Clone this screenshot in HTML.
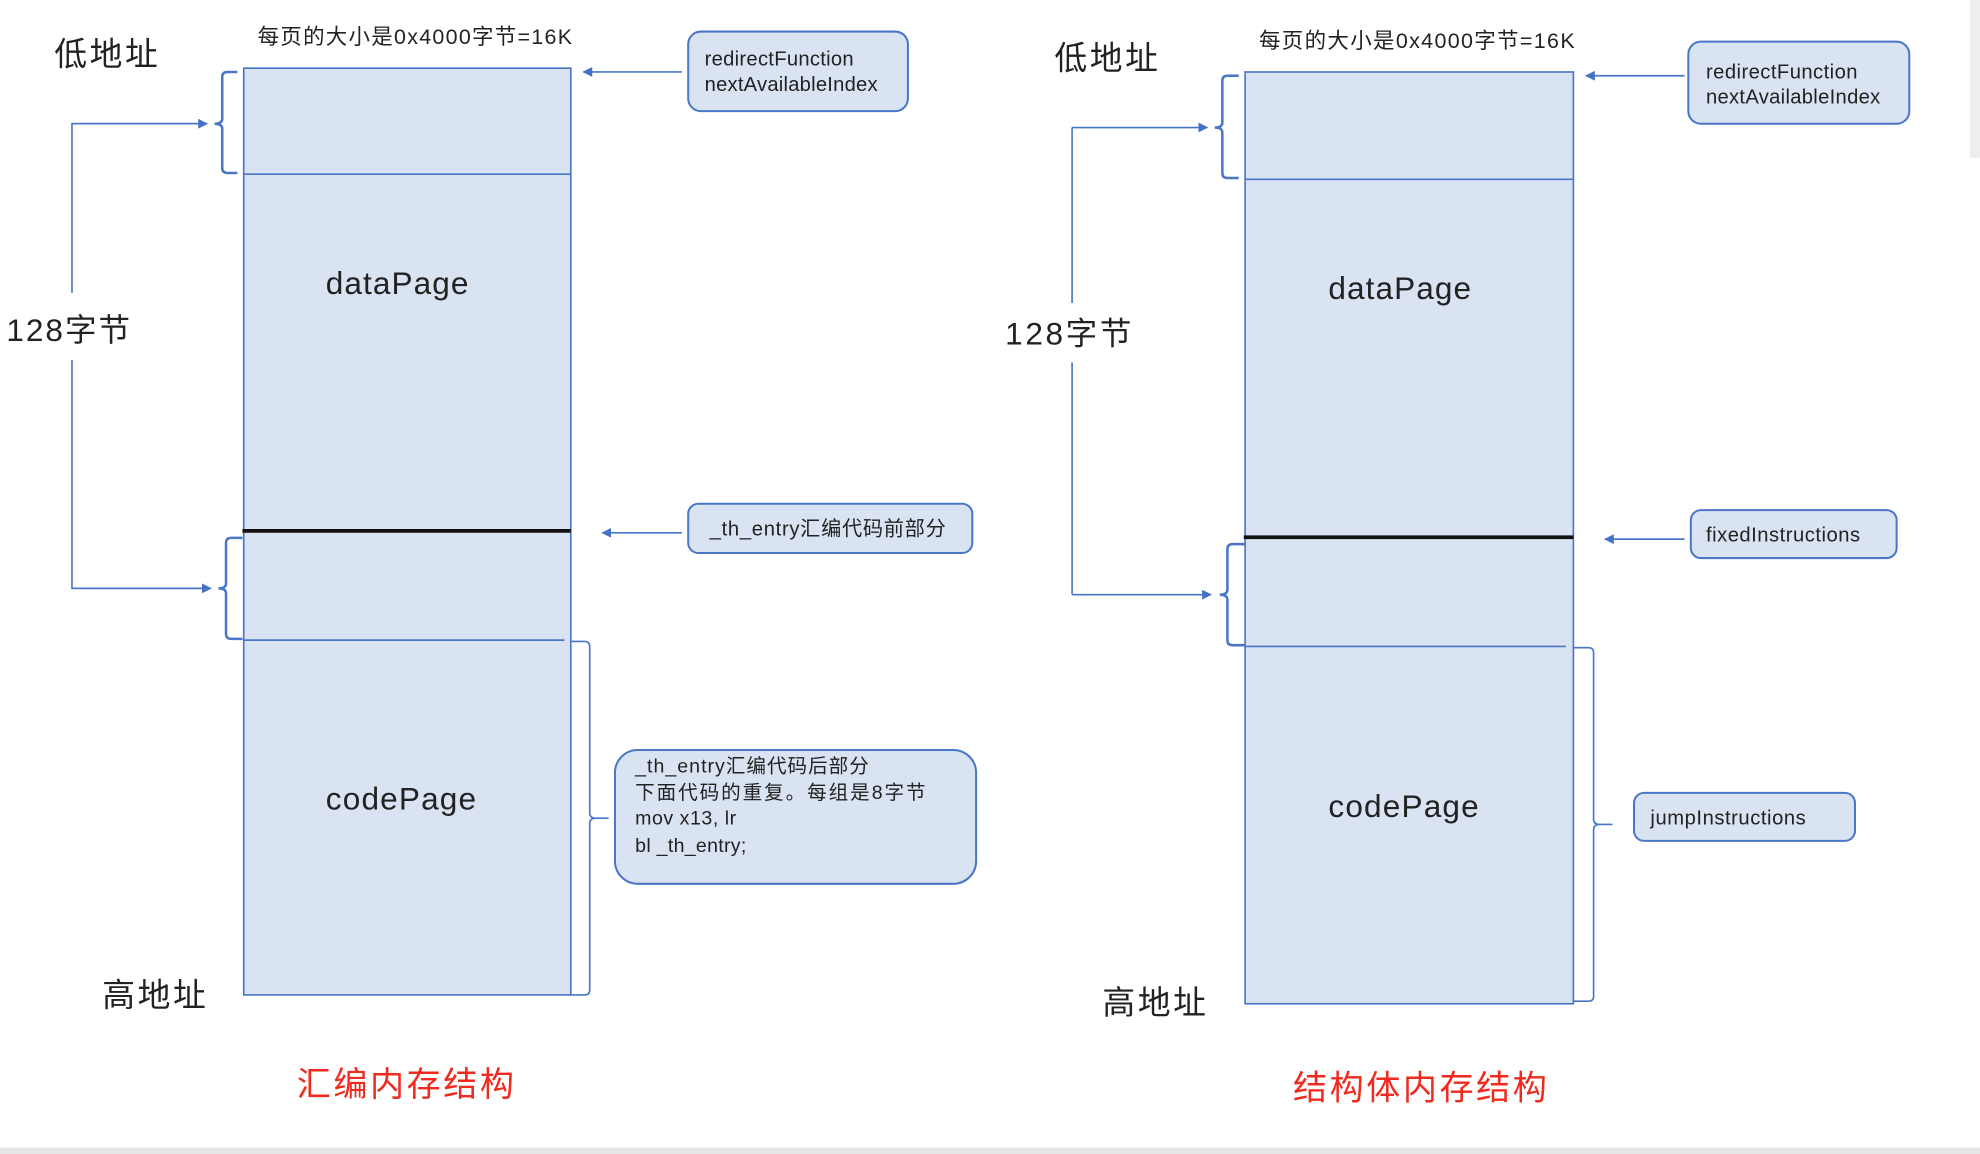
<!DOCTYPE html>
<html><head><meta charset="utf-8"><style>
html,body{margin:0;padding:0;background:#fff;overflow:hidden}
svg{display:block}
text{font-family:"Liberation Sans","Noto Sans CJK SC",sans-serif;fill:#222}
</style></head><body>
<svg width="1980" height="1154" viewBox="0 0 1568 914" preserveAspectRatio="none" xmlns="http://www.w3.org/2000/svg">
<defs>
<marker id="ah" viewBox="0 0 10 10" refX="9" refY="5" markerWidth="6" markerHeight="6" orient="auto"><path d="M0,0 L10,5 L0,10 z" fill="#4472c4"/></marker>
</defs>
<rect x="0" y="909" width="1568" height="5" fill="#e6e6e6"/>
<rect x="1560" y="0" width="8" height="125" fill="#eeeeee"/>
<g stroke="#4a76c8" fill="none" stroke-width="1.3">
<rect x="193" y="54" width="259" height="734" fill="#dae3f2"/>
<line x1="193" y1="138" x2="452" y2="138"/>
<line x1="193" y1="507" x2="447" y2="507"/>
<path d="M188,57 H180 Q176,57 176,61 V94 Q176,98 170,98 Q176,98 176,102 V133 Q176,137 180,137 H188" stroke-width="2"/>
<path d="M192,426 H183 Q179,426 179,430 V462 Q179,466 173,466 Q179,466 179,470 V502 Q179,506 183,506 H192" stroke-width="2"/>
<path d="M164,98 H57 V232 M57,285 V466 H166" />
<line x1="57" y1="98" x2="164" y2="98" marker-end="url(#ah)"/>
<line x1="57" y1="466" x2="167" y2="466" marker-end="url(#ah)"/>
<path d="M452,508 H463 Q467,508 467,512 V644 Q467,648 472,648 H482 M472,648 Q467,648 467,652 V784 Q467,788 463,788 H452"/>
<line x1="540" y1="57" x2="462" y2="57" marker-end="url(#ah)"/>
<line x1="540" y1="422" x2="477" y2="422" marker-end="url(#ah)"/>
<rect x="545" y="25" width="174" height="63" rx="10" fill="#dae3f2" stroke-width="1.6"/>
<rect x="545" y="399" width="225" height="39" rx="8" fill="#dae3f2" stroke-width="1.6"/>
<rect x="487" y="594" width="286" height="106" rx="18" fill="#dae3f2" stroke-width="1.6"/>
<rect x="986" y="57" width="260" height="738" fill="#dae3f2"/>
<line x1="986" y1="142" x2="1246" y2="142"/>
<line x1="986" y1="512" x2="1240" y2="512"/>
<path d="M981,60 H972 Q968,60 968,64 V97 Q968,101 962,101 Q968,101 968,105 V137 Q968,141 972,141 H981" stroke-width="2"/>
<path d="M986,431 H976 Q972,431 972,435 V467 Q972,471 966,471 Q972,471 972,475 V507 Q972,511 976,511 H986" stroke-width="2"/>
<path d="M849,101 V240 M849,287 V471"/>
<line x1="849" y1="101" x2="956" y2="101" marker-end="url(#ah)"/>
<line x1="849" y1="471" x2="959" y2="471" marker-end="url(#ah)"/>
<path d="M1246,513 H1258 Q1262,513 1262,517 V649 Q1262,653 1267,653 H1277 M1267,653 Q1262,653 1262,657 V789 Q1262,793 1258,793 H1246"/>
<line x1="1334" y1="60" x2="1256" y2="60" marker-end="url(#ah)"/>
<line x1="1334" y1="427" x2="1271" y2="427" marker-end="url(#ah)"/>
<rect x="1337" y="33" width="175" height="65" rx="10" fill="#dae3f2" stroke-width="1.6"/>
<rect x="1339" y="404" width="163" height="38" rx="8" fill="#dae3f2" stroke-width="1.6"/>
<rect x="1294" y="628" width="175" height="38" rx="8" fill="#dae3f2" stroke-width="1.6"/>
</g>
<line x1="192" y1="420.5" x2="452" y2="420.5" stroke="#111" stroke-width="3"/>
<line x1="985" y1="425.5" x2="1246" y2="425.5" stroke="#111" stroke-width="3"/>
<text x="43" y="52" font-size="26" textLength="82">低地址</text>
<text x="204" y="35" font-size="17" textLength="249">每页的大小是0x4000字节=16K</text>
<text x="5" y="270" font-size="25" textLength="98">128字节</text>
<text x="258" y="233" font-size="25" textLength="113">dataPage</text>
<text x="258" y="641" font-size="25" textLength="119">codePage</text>
<text x="81" y="797" font-size="26" textLength="82">高地址</text>
<text x="235" y="868" font-size="27" textLength="172" style="fill:#f02a1e">汇编内存结构</text>
<text x="558" y="52" font-size="16" textLength="118">redirectFunction</text>
<text x="558" y="72" font-size="16" textLength="137">nextAvailableIndex</text>
<text x="562" y="424" font-size="16" textLength="187">_th_entry汇编代码前部分</text>
<text x="503" y="612" font-size="15.5" textLength="185">_th_entry汇编代码后部分</text>
<text x="503" y="633" font-size="15.5" textLength="230">下面代码的重复。每组是8字节</text>
<text x="503" y="653" font-size="15.5" textLength="80">mov x13, lr</text>
<text x="503" y="675" font-size="15.5" textLength="88">bl _th_entry;</text>
<text x="835" y="55" font-size="26" textLength="82">低地址</text>
<text x="997" y="38" font-size="17" textLength="250">每页的大小是0x4000字节=16K</text>
<text x="796" y="273" font-size="25" textLength="100">128字节</text>
<text x="1052" y="237" font-size="25" textLength="113">dataPage</text>
<text x="1052" y="647" font-size="25" textLength="119">codePage</text>
<text x="873" y="803" font-size="26" textLength="82">高地址</text>
<text x="1024" y="871" font-size="27" textLength="201" style="fill:#f02a1e">结构体内存结构</text>
<text x="1351" y="62" font-size="16" textLength="120">redirectFunction</text>
<text x="1351" y="82" font-size="16" textLength="138">nextAvailableIndex</text>
<text x="1351" y="429" font-size="16" textLength="122">fixedInstructions</text>
<text x="1307" y="653" font-size="16" textLength="123">jumpInstructions</text>
</svg>
</body></html>
